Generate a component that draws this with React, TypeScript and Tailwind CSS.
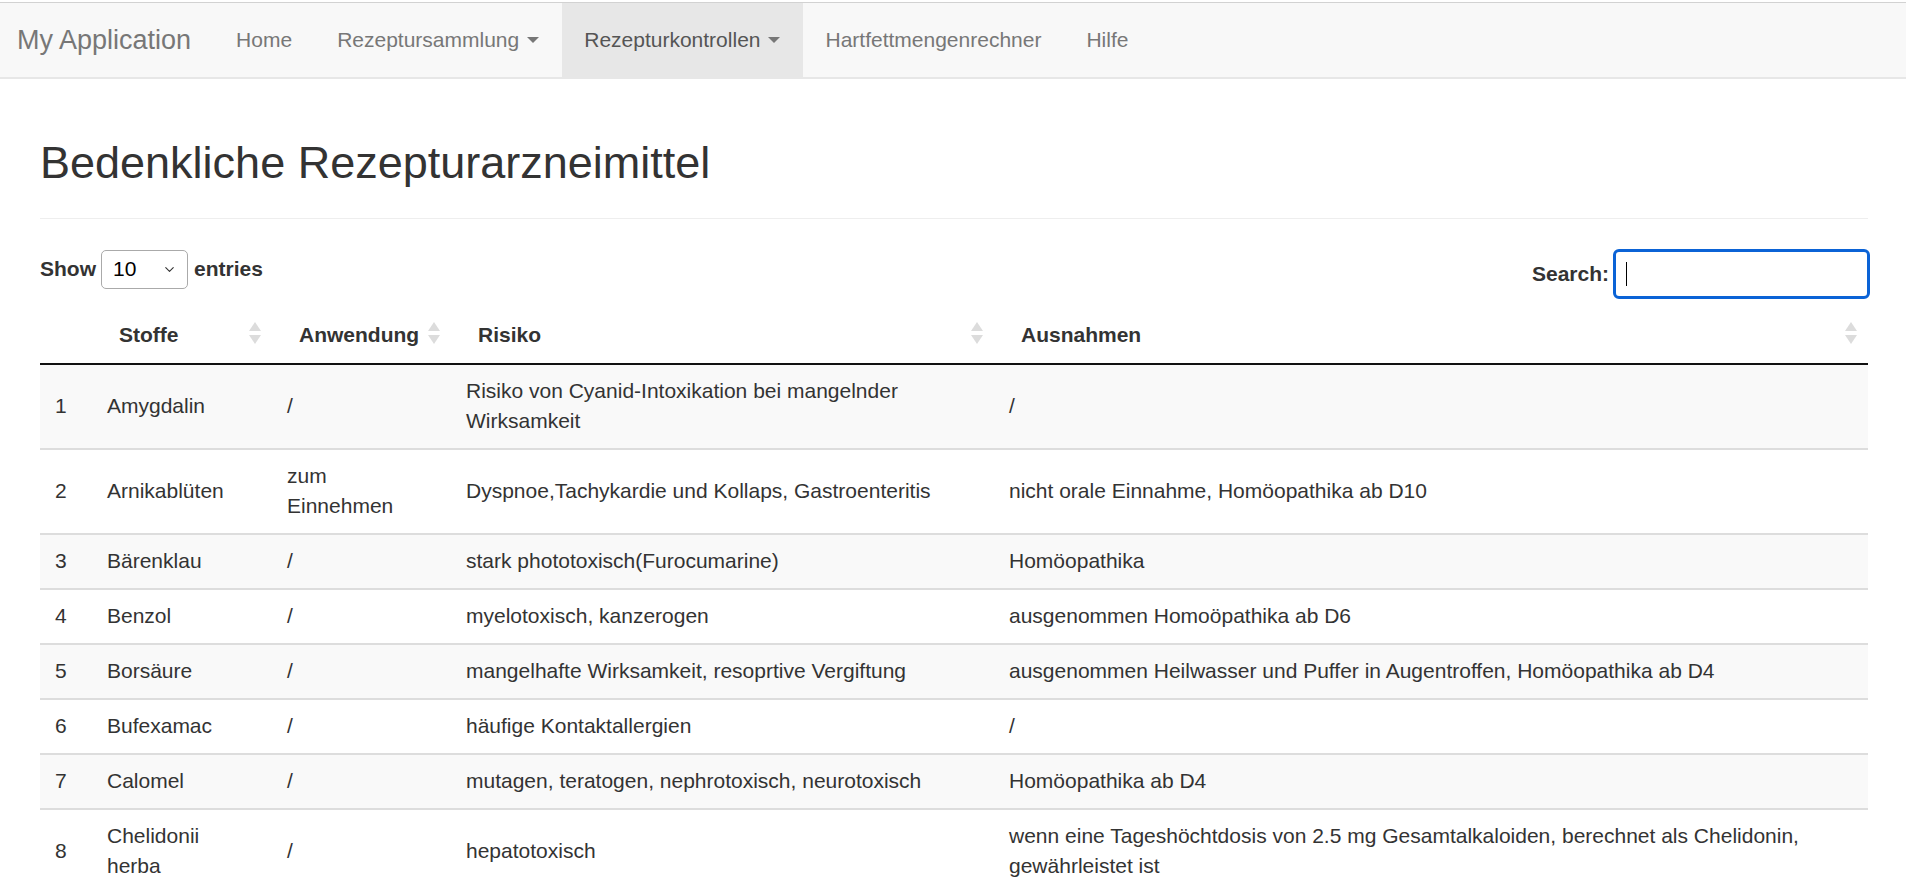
import { ChevronDown } from "lucide-react";

type Row = {
  nr: number;
  stoff: string;
  anwendung: string;
  risiko: string;
  ausnahmen: string;
};

const rows: Row[] = [
  { nr: 1, stoff: "Amygdalin", anwendung: "/", risiko: "Risiko von Cyanid-Intoxikation bei mangelnder Wirksamkeit", ausnahmen: "/" },
  { nr: 2, stoff: "Arnikablüten", anwendung: "zum Einnehmen", risiko: "Dyspnoe,Tachykardie und Kollaps, Gastroenteritis", ausnahmen: "nicht orale Einnahme, Homöopathika ab D10" },
  { nr: 3, stoff: "Bärenklau", anwendung: "/", risiko: "stark phototoxisch(Furocumarine)", ausnahmen: "Homöopathika" },
  { nr: 4, stoff: "Benzol", anwendung: "/", risiko: "myelotoxisch, kanzerogen", ausnahmen: "ausgenommen Homoöpathika ab D6" },
  { nr: 5, stoff: "Borsäure", anwendung: "/", risiko: "mangelhafte Wirksamkeit, resoprtive Vergiftung", ausnahmen: "ausgenommen Heilwasser und Puffer in Augentroffen, Homöopathika ab D4" },
  { nr: 6, stoff: "Bufexamac", anwendung: "/", risiko: "häufige Kontaktallergien", ausnahmen: "/" },
  { nr: 7, stoff: "Calomel", anwendung: "/", risiko: "mutagen, teratogen, nephrotoxisch, neurotoxisch", ausnahmen: "Homöopathika ab D4" },
  { nr: 8, stoff: "Chelidonii herba", anwendung: "/", risiko: "hepatotoxisch", ausnahmen: "wenn eine Tageshöchtdosis von 2.5 mg Gesamtalkaloiden, berechnet als Chelidonin, gewährleistet ist" },
];

function Caret() {
  return (
    <span className="inline-block w-0 h-0 ml-[8px] align-middle border-t-[6px] border-x-[6px] border-x-transparent border-t-[#777]" />
  );
}

function SortIcon() {
  return (
    <svg
      className="absolute right-[11px] top-1/2 -translate-y-1/2"
      width="12"
      height="22"
      viewBox="0 0 12 22"
    >
      <path d="M6 0 L12 9 L0 9 Z" fill="#dcdcdc" />
      <path d="M6 22 L12 13 L0 13 Z" fill="#dcdcdc" />
    </svg>
  );
}

function Navbar() {
  const links = [
    { label: "Home" },
    { label: "Rezeptursammlung", caret: true },
    { label: "Rezepturkontrollen", caret: true, active: true },
    { label: "Hartfettmengenrechner" },
    { label: "Hilfe" },
  ];
  return (
    <nav className="mt-[2px] h-[77px] flex items-stretch bg-[#f8f8f8] border-t border-t-[#d2d2d2] border-b-2 border-b-[#e7e7e7]">
      <a className="flex items-center pl-[17px] pr-[22.5px] text-[27px] leading-[30px] text-[#777]">
        My Application
      </a>
      {links.map((l) => (
        <a
          key={l.label}
          className={`flex items-center px-[22.5px] ${
            l.active ? "bg-[#e7e7e7] text-[#555]" : "text-[#777]"
          }`}
        >
          {l.label}
          {l.caret && <Caret />}
        </a>
      ))}
    </nav>
  );
}

export default function App() {
  return (
    <div className="min-h-screen bg-white font-['Liberation_Sans',Arial,sans-serif] text-[21px] leading-[30px] text-[#333]">
      <Navbar />

      <main className="pl-[40px] pr-[38px]">
        <div className="mt-[59px] pb-[30px] border-b-[1.5px] border-b-[#eee]">
          <h2 className="text-[45px] leading-[49.5px] font-normal">
            Bedenkliche Rezepturarzneimittel
          </h2>
        </div>

        <div className="mt-[30px] flex justify-between items-start">
          <label className="mt-[1px] flex items-center font-bold">
            Show
            <div className="ml-[5px] mr-[6px] w-[87px] h-[39px] flex items-center justify-between pl-[11px] pr-[10px] border border-[#aaa] rounded-[5px] bg-white font-normal text-black">
              <span>10</span>
              <ChevronDown className="w-[15px] h-[15px] text-[#333]" strokeWidth={1.75} />
            </div>
            entries
          </label>

          <label className="flex items-center font-bold -mr-[2px]">
            Search:
            <div className="ml-[4px] w-[257px] h-[50px] flex items-center pl-[10px] border-[3px] border-[#0b63d6] rounded-[6px] bg-white">
              <span className="w-px h-[24px] bg-black" />
            </div>
          </label>
        </div>

        <table className="mt-[4px] w-full table-fixed border-collapse">
          <colgroup>
            <col className="w-[52px]" />
            <col className="w-[180px]" />
            <col className="w-[179px]" />
            <col className="w-[543px]" />
            <col />
          </colgroup>
          <thead>
            <tr className="border-b-2 border-b-[#111]">
              <th className="pt-[17px] pb-[13px] px-[27px] text-left font-bold" />
              {["Stoffe", "Anwendung", "Risiko", "Ausnahmen"].map((h) => (
                <th key={h} className="relative pt-[17px] pb-[13px] pl-[27px] pr-[27px] text-left font-bold">
                  {h}
                  <SortIcon />
                </th>
              ))}
            </tr>
          </thead>
          <tbody>
            {rows.map((r, i) => {
              const bg = i % 2 === 0 ? "bg-[#f9f9f9]" : "bg-white";
              const border = i === 0 ? "" : "border-t-2 border-t-[#ddd]";
              const td = `px-[15px] py-[11.5px] align-middle ${border}`;
              return (
                <tr key={r.nr} className={bg}>
                  <td className={td}>{r.nr}</td>
                  <td className={td}>{r.stoff}</td>
                  <td className={td}>{r.anwendung}</td>
                  <td className={td}>{r.risiko}</td>
                  <td className={td}>{r.ausnahmen}</td>
                </tr>
              );
            })}
          </tbody>
        </table>
      </main>
    </div>
  );
}
